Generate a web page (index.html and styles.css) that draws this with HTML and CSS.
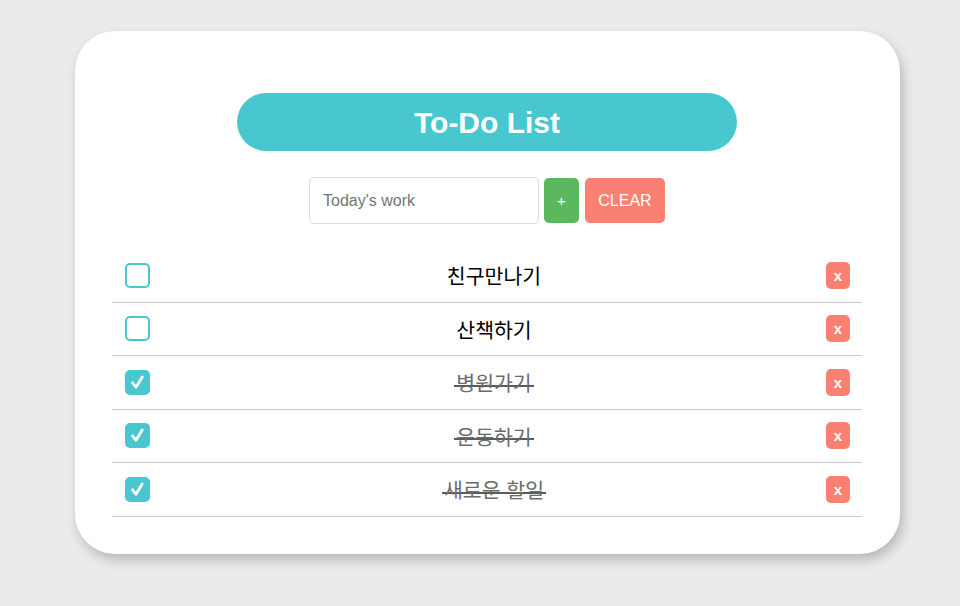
FILE: index.html
```html
<!DOCTYPE html>
<html lang="ko">
<head>
<meta charset="utf-8">
<title>To-Do List</title>
<link rel="stylesheet" href="styles.css">
</head>
<body>
<div class="card">
  <h1 class="title">To-Do List</h1>
  <div class="entry">
    <input class="entry-input" type="text" placeholder="Today's work">
    <button class="btn btn-add">+</button>
    <button class="btn btn-clear">CLEAR</button>
  </div>
  <ul class="list">
    <li class="item">
      <span class="check"></span>
      <span class="text"><span class="label">친구만나기</span></span>
      <button class="del">x</button>
    </li>
    <li class="item">
      <span class="check"></span>
      <span class="text"><span class="label">산책하기</span></span>
      <button class="del">x</button>
    </li>
    <li class="item done">
      <span class="check"><svg viewBox="0 0 25 25" width="25" height="25"><path d="M7.5 12.8 L11 17.2 L17.2 7" fill="none" stroke="#fff" stroke-width="2.8" stroke-linecap="round" stroke-linejoin="round"/></svg></span>
      <span class="text"><span class="label">병원가기</span></span>
      <button class="del">x</button>
    </li>
    <li class="item done">
      <span class="check"><svg viewBox="0 0 25 25" width="25" height="25"><path d="M7.5 12.8 L11 17.2 L17.2 7" fill="none" stroke="#fff" stroke-width="2.8" stroke-linecap="round" stroke-linejoin="round"/></svg></span>
      <span class="text"><span class="label">운동하기</span></span>
      <button class="del">x</button>
    </li>
    <li class="item done">
      <span class="check"><svg viewBox="0 0 25 25" width="25" height="25"><path d="M7.5 12.8 L11 17.2 L17.2 7" fill="none" stroke="#fff" stroke-width="2.8" stroke-linecap="round" stroke-linejoin="round"/></svg></span>
      <span class="text"><span class="label">새로운 할일</span></span>
      <button class="del">x</button>
    </li>
  </ul>
</div>
</body>
</html>
```

FILE: styles.css
```css
html, body {
  margin: 0;
  padding: 0;
  background: #ebebeb;
  font-family: "Liberation Sans", Arial, "Noto Sans CJK KR", sans-serif;
}

body {
  padding: 31px 0 0 75px;
  height: 606px;
  box-sizing: border-box;
}

.card {
  width: 825px;
  box-sizing: border-box;
  background: #fff;
  border-radius: 40px;
  padding: 62px 38px 37px 37px;
  box-shadow: 3px 6px 12px rgba(0, 0, 0, 0.22);
}

.title {
  width: 500px;
  height: 58px;
  margin: 0 auto;
  background: #48c7cf;
  border-radius: 29px;
  color: #fff;
  font-size: 30px;
  font-weight: bold;
  line-height: 59px;
  text-align: center;
}

.entry {
  display: flex;
  justify-content: center;
  align-items: center;
  gap: 5px;
  margin-top: 26px;
}

.entry-input {
  width: 230px;
  height: 47px;
  box-sizing: border-box;
  border: 1px solid #dcdcdc;
  border-radius: 5px;
  padding: 0 13px;
  font-family: "Liberation Sans", Arial, sans-serif;
  font-size: 16px;
  color: #333;
  outline: none;
}

.entry-input::placeholder {
  color: #757575;
}

.btn {
  height: 45px;
  border: none;
  border-radius: 5px;
  color: #fff;
  font-family: "Liberation Sans", Arial, sans-serif;
  font-size: 16px;
  padding: 0;
}

.btn-add {
  width: 35px;
  background: #5cb85c;
  font-size: 15px;
}

.btn-clear {
  width: 80px;
  background: #fa8072;
  margin-left: 1px;
}

.list {
  list-style: none;
  margin: 25px 0 0 0;
  padding: 0;
}

.item {
  display: flex;
  align-items: center;
  height: 53.5px;
  box-sizing: border-box;
  border-bottom: 1px solid #cccccc;
  padding: 0 12px 0 13px;
}

.check {
  width: 25px;
  height: 25px;
  box-sizing: border-box;
  border: 2px solid #48c7cf;
  border-radius: 5px;
  flex: none;
  position: relative;
}

.check svg {
  position: absolute;
  left: -2px;
  top: -2px;
}

.done .check {
  background: #48c7cf;
}

.text {
  flex: 1;
  text-align: center;
  padding-left: 12px;
  font-family: "Noto Sans CJK KR", sans-serif;
  font-size: 20.5px;
  color: #000;
}

.done .label {
  color: #6b6b6b;
  background: linear-gradient(#5a5a5a, #5a5a5a) no-repeat 0 62% / 100% 2px;
  padding: 0 2px;
}

.del {
  width: 24px;
  height: 27px;
  flex: none;
  border: none;
  border-radius: 5px;
  background: #fa8072;
  color: #fff;
  font-family: "Liberation Sans", Arial, sans-serif;
  font-size: 15px;
  font-weight: bold;
  padding: 0;
  line-height: 27px;
}
```
